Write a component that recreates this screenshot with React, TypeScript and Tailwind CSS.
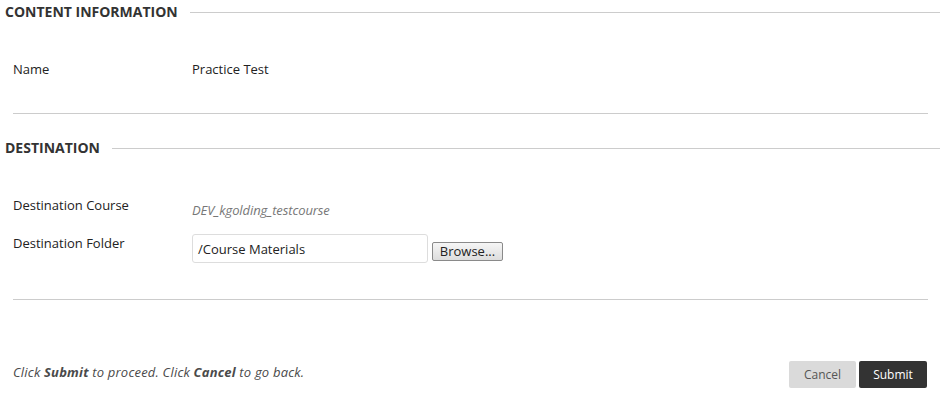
import React from "react";

function SectionHeader({ title, mt }: { title: string; mt: string }) {
  return (
    <div className={`flex items-center h-[24px] ${mt}`}>
      <h2 className="pl-[5px] text-[14px] font-bold uppercase text-[#333] leading-[24px] whitespace-nowrap">{title}</h2>
      <div className="flex-1 ml-[12px] h-px bg-[#cccccc]" />
    </div>
  );
}

export default function App() {
  return (
    <div
      className="w-[940px] h-[409px] bg-white text-[13px] text-[#222]"
      style={{ fontFamily: '"Open Sans", "Noto Sans", sans-serif' }}
    >
      <SectionHeader title="Content Information" mt="mt-0" />
      <div className="flex mt-[36px] pl-[13px] leading-[18px]">
        <div className="w-[179px]">Name</div>
        <div>Practice Test</div>
      </div>
      <div className="mt-[35px] ml-[13px] mr-[12px] h-px bg-[#cccccc]" />

      <SectionHeader title="Destination" mt="mt-[22px]" />
      <div className="flex mt-[36px] pl-[13px] leading-[18px]">
        <div className="w-[179px]">Destination Course</div>
        <div className="pt-[5px] italic text-[#777] tracking-[-0.1px]">DEV_kgolding_testcourse</div>
      </div>
      <div className="flex items-start mt-[15px] pl-[13px] leading-[18px]">
        <div className="w-[179px]">Destination Folder</div>
        <div className="w-[236px] h-[29px] border border-[#dddddd] rounded-[3px] px-[5px] flex items-center">
          /Course Materials
        </div>
        <button className="ml-[4px] mt-[8px] h-[19px] w-[71px] border border-[#8a8a8a] rounded-[2px] bg-gradient-to-b from-[#f6f6f6] to-[#dddddd] text-[13px] text-[#222] leading-[17px]">
          Browse...
        </button>
      </div>
      <div className="mt-[36px] ml-[13px] mr-[12px] h-px bg-[#cccccc]" />

      <div className="flex items-center justify-between mt-[61px] pl-[13px] pr-[13px]">
        <p className="italic text-[#4a4a4a] leading-[18px] tracking-[0.2px] mb-[5px]">
          Click <b>Submit</b> to proceed. Click <b>Cancel</b> to go back.
        </p>
        <div className="flex gap-[3px]">
          <button className="w-[67px] h-[27px] bg-[#dadada] text-[#555] rounded-[2px] text-[12px]">Cancel</button>
          <button className="w-[68px] h-[27px] bg-[#333] text-white rounded-[2px] text-[12px]">Submit</button>
        </div>
      </div>
    </div>
  );
}
